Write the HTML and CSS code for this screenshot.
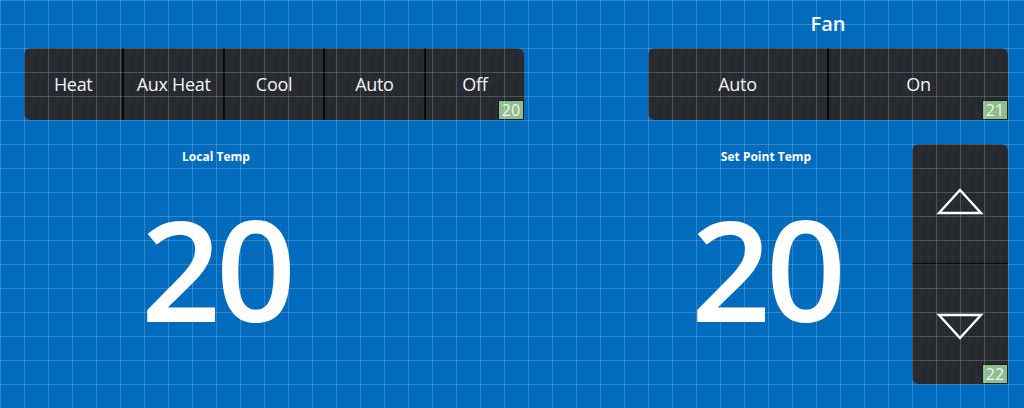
FILE: index.html
```html
<!DOCTYPE html>
<html lang="en">
<head>
<meta charset="utf-8">
<title>Thermostat</title>
<link rel="stylesheet" href="styles.css">
</head>
<body>
<main class="page">
  <section class="top-row">
    <div class="mode-group">
      <div class="panel seg-panel">
        <button class="seg">Heat</button>
        <button class="seg">Aux Heat</button>
        <button class="seg">Cool</button>
        <button class="seg">Auto</button>
        <button class="seg">Off</button>
        <span class="badge">20</span>
      </div>
    </div>
    <div class="fan-group">
      <div class="group-label">Fan</div>
      <div class="panel seg-panel">
        <button class="seg">Auto</button>
        <button class="seg">On</button>
        <span class="badge">21</span>
      </div>
    </div>
  </section>
  <section class="bottom-row">
    <div class="temp local">
      <div class="temp-label">Local Temp</div>
      <div class="temp-value">20</div>
    </div>
    <div class="temp setpoint">
      <div class="temp-label">Set Point Temp</div>
      <div class="temp-value">20</div>
    </div>
    <div class="panel stepper">
      <button class="step">
        <svg width="48" height="28" viewBox="0 0 48 28"><polygon points="24,3 45,26 3,26" fill="none" stroke="#fff" stroke-width="2.4" stroke-linejoin="miter"/></svg>
      </button>
      <button class="step step-down">
        <svg width="48" height="28" viewBox="0 0 48 28"><polygon points="3,2 45,2 24,25" fill="none" stroke="#fff" stroke-width="2.4" stroke-linejoin="miter"/></svg>
      </button>
      <span class="badge">22</span>
    </div>
  </section>
</main>
<div class="grid-overlay"></div>
</body>
</html>
```
FILE: styles.css
```css
html, body {
  margin: 0;
  padding: 0;
}
body {
  width: 1024px;
  height: 408px;
  overflow: hidden;
  background: #006bbd;
  font-family: "Open Sans", "Noto Sans", sans-serif;
  color: #fff;
}
.page {
  padding: 0 16px 0 24px;
  height: 408px;
  box-sizing: border-box;
}
.top-row {
  display: flex;
  justify-content: space-between;
  align-items: flex-end;
  height: 120px;
}
.mode-group {
  width: 500px;
}
.fan-group {
  width: 360px;
  display: flex;
  flex-direction: column;
}
.group-label {
  height: 48px;
  display: flex;
  align-items: center;
  justify-content: center;
  font-size: 20px;
  font-weight: 600;
  padding-bottom: 1px;
  box-sizing: border-box;
}
.panel {
  position: relative;
  background: #262a2f;
  border-radius: 7px;
}
.seg-panel {
  display: flex;
  height: 72px;
}
.seg {
  flex: 1 1 0;
  background: transparent;
  border: 0;
  border-left: 2px solid #050607;
  color: #f4f4f4;
  font-family: "Open Sans", "Noto Sans", sans-serif;
  font-size: 18px;
  letter-spacing: -0.3px;
  padding: 0;
  margin: 0;
}
.seg:first-child {
  border-left: 0;
}
.badge {
  position: absolute;
  right: 0;
  bottom: 0;
  width: 26px;
  height: 20px;
  box-sizing: border-box;
  border: 1px solid #1b1e20;
  background: #8fbc8f;
  color: #eef4ee;
  font-size: 16px;
  line-height: 18px;
  text-align: center;
}
.bottom-row {
  display: flex;
  height: 288px;
}
.temp {
  display: flex;
  flex-direction: column;
  align-items: center;
  padding-top: 24px;
  box-sizing: border-box;
}
.local {
  width: 384px;
}
.setpoint {
  width: 288px;
  margin-left: 216px;
  padding-right: 4px;
}
.temp-label {
  height: 26px;
  line-height: 26px;
  font-size: 12px;
  font-weight: 700;
}
.temp-value {
  margin-top: 28px;
  height: 140px;
  line-height: 140px;
  font-size: 140px;
  font-weight: 600;
  letter-spacing: -5px;
}
.stepper {
  width: 96px;
  height: 240px;
  margin-top: 24px;
  display: flex;
  flex-direction: column;
}
.step {
  flex: 1 1 0;
  background: transparent;
  border: 0;
  padding: 0;
  margin: 0;
  display: flex;
  align-items: center;
  justify-content: center;
}
.step svg {
  display: block;
  margin-top: -6px;
}
.step-down {
  border-top: 2px solid #050607;
}
.step-down svg {
  margin-top: 4px;
}
.grid-overlay {
  position: fixed;
  inset: 0;
  pointer-events: none;
  background-image:
    linear-gradient(to right, rgba(255,255,255,0.17) 1px, transparent 1px),
    linear-gradient(to bottom, rgba(255,255,255,0.17) 1px, transparent 1px),
    linear-gradient(to right, rgba(255,255,255,0.02) 1px, transparent 1px),
    linear-gradient(to bottom, rgba(255,255,255,0.02) 1px, transparent 1px);
  background-size: 24px 24px, 24px 24px, 8px 8px, 8px 8px;
}
```
